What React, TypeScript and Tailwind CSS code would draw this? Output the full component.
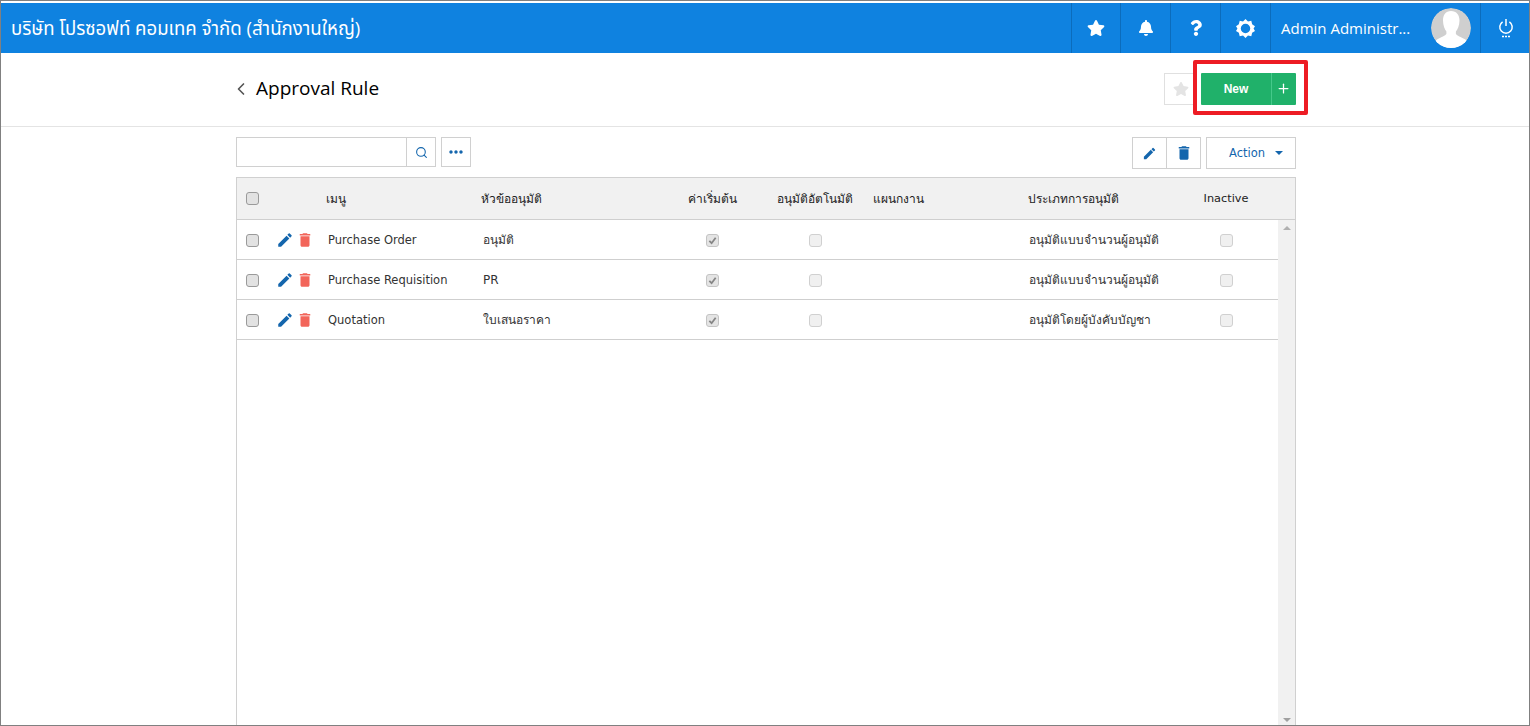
import { ChevronLeft, Plus, Search } from 'lucide-react'
import { FaBell, FaQuestion, FaStar } from 'react-icons/fa'
import { MdDelete, MdEdit, MdMoreHoriz } from 'react-icons/md'

interface Rule {
  menu: string
  subject: string
  type: string
}

const rules: Rule[] = [
  { menu: 'Purchase Order', subject: 'อนุมัติ', type: 'อนุมัติแบบจำนวนผู้อนุมัติ' },
  { menu: 'Purchase Requisition', subject: 'PR', type: 'อนุมัติแบบจำนวนผู้อนุมัติ' },
  { menu: 'Quotation', subject: 'ใบเสนอราคา', type: 'อนุมัติโดยผู้บังคับบัญชา' },
]

const rowGrid =
  'grid grid-cols-[30px_59px_155px_181px_100px_106px_159px_148px_102px] items-center'

function Checkbox({ checked, disabled }: { checked?: boolean; disabled?: boolean }) {
  return (
    <span
      className={`flex h-[13px] w-[13px] items-center justify-center rounded-[3px] border ${
        checked
          ? 'border-[#c4c4c4] bg-[#e4e4e4]'
          : disabled
            ? 'border-[#d0d0d0] bg-[#f0f0f0]'
            : 'border-[#9a9a9a] bg-[#e2e2e2]'
      }`}
    >
      {checked && (
        <svg viewBox="0 0 10 10" className="h-[9px] w-[9px]">
          <path d="M1.5 5.5 4 8l4.5-6" fill="none" stroke="#858585" strokeWidth="2" />
        </svg>
      )}
    </span>
  )
}

function HeaderCell({ children, narrow }: { children: React.ReactNode; narrow?: boolean }) {
  return (
    <div
      className={`flex h-[50px] items-center justify-center border-l border-[#0b6cbc] ${
        narrow ? 'w-[49px]' : 'w-[50px]'
      }`}
    >
      {children}
    </div>
  )
}

function GearIcon() {
  return (
    <svg viewBox="0 0 20 20" className="h-[19px] w-[19px]">
      <path
        fill="#fff"
        fillRule="evenodd"
        d="M10 0l2.6 2.6 3.5-.7.9 3.5 3 2.1-1.5 2.5 1.5 2.5-3 2.1-.9 3.5-3.5-.7L10 20l-2.6-2.6-3.5.7-.9-3.5-3-2.1L1.5 10 0 7.5l3-2.1.9-3.5 3.5.7zM10 5a5 5 0 1 0 0 10 5 5 0 0 0 0-10z"
      />
    </svg>
  )
}

function PowerIcon() {
  return (
    <svg viewBox="0 0 16 20" className="h-5 w-4" fill="none" stroke="#fff">
      <path d="M8 1v7" strokeWidth="1.5" />
      <path d="M4.6 3.8a6.2 6.2 0 1 0 6.8 0" strokeWidth="1.5" />
      <path d="M4 18.5h2M7 18.5h2M10 18.5h2" strokeWidth="1.3" />
    </svg>
  )
}

function Avatar() {
  return (
    <svg viewBox="0 0 40 40" className="h-10 w-10 rounded-full">
      <circle cx="20" cy="20" r="20" fill="#cfcfcf" />
      <path
        fill="#fff"
        d="M20 3c5.6 0 8.5 4 8.5 9.5 0 5-2 9-3.6 11v2.6c1 1.6 5 3.2 9.1 5.2 1.4.8 2.6 2 3.2 3.2A20 20 0 0 1 20 40a20 20 0 0 1-16.8-5.5c.6-1.2 1.8-2.4 3.2-3.2 4-2 8-3.6 9-5.2v-2.6c-1.5-2-3.4-6-3.4-11C12 7 14.6 3 20 3z"
      />
    </svg>
  )
}

export default function App() {
  return (
    <div className="flex h-[726px] w-[1530px] flex-col overflow-hidden border border-[#808080] bg-white pt-[2px] font-['DejaVu_Sans',sans-serif]">
      {/* top bar */}
      <header className="flex h-[50px] shrink-0 items-center bg-[#0f82e0] pl-[10px] text-white">
        <div className="flex-1 font-['Open_Sans','Noto_Sans_Thai',sans-serif] text-[18.6px]">
          บริษัท โปรซอฟท์ คอมเทค จำกัด (สำนักงานใหญ่)
        </div>
        <HeaderCell narrow>
          <FaStar className="h-[18px] w-[18px]" />
        </HeaderCell>
        <HeaderCell>
          <FaBell className="h-4 w-4" />
        </HeaderCell>
        <HeaderCell>
          <FaQuestion className="h-4 w-4" />
        </HeaderCell>
        <HeaderCell>
          <GearIcon />
        </HeaderCell>
        <div className="flex h-[50px] w-[210px] items-center justify-between border-l border-[#0b6cbc] pl-[10px] pr-[9px]">
          <span className="font-['Open_Sans',sans-serif] text-[15px]">Admin Administr...</span>
          <Avatar />
        </div>
        <div className="flex h-[50px] w-[49px] items-center justify-center border-l border-[#0b6cbc] pl-px">
          <PowerIcon />
        </div>
      </header>

      {/* title row */}
      <div className="flex h-[74px] shrink-0 items-center border-b border-[#e4e4e4] pb-[2px] pl-[235px]">
        <div className="flex w-[1060px] items-center">
          <ChevronLeft className="-ml-[5px] h-5 w-5 text-[#555]" strokeWidth={2} />
          <h1 className="flex-1 pl-[5px] font-['Open_Sans',sans-serif] text-[19px] text-black">
            Approval Rule
          </h1>
          <button className="flex h-8 w-[33px] items-center justify-center border border-[#e0e0e0] bg-white">
            <FaStar className="h-4 w-4 text-[#e4e4e4]" />
          </button>
          <button className="ml-1 flex h-8 w-[70px] items-center justify-center rounded-l-[1px] bg-[#20b16a] font-['Liberation_Sans',sans-serif] text-[12px] font-bold text-white">
            New
          </button>
          <button className="flex h-8 w-[25px] items-center justify-center rounded-r-[1px] border-l border-[#45c98a] bg-[#20b16a] pr-[2px] text-white">
            <Plus className="h-[15px] w-[15px]" strokeWidth={2} />
          </button>
        </div>
      </div>

      {/* toolbar */}
      <div className="ml-[235px] mt-[10px] flex w-[1060px] shrink-0 items-start">
        <input className="h-[30px] w-[170px] border border-r-0 border-[#d0d0d0] bg-white" />
        <button className="flex h-[30px] w-[30px] items-center justify-center border border-[#d0d0d0]">
          <Search className="h-[13px] w-[13px] text-[#1466ad]" strokeWidth={2} />
        </button>
        <button className="ml-[5px] flex h-[30px] w-[30px] items-center justify-center border border-[#d0d0d0]">
          <MdMoreHoriz className="h-5 w-5 text-[#1466ad]" />
        </button>
        <div className="flex-1" />
        <button className="flex h-8 w-[35px] items-center justify-center border border-[#d0d0d0]">
          <MdEdit className="h-[15px] w-[15px] text-[#1466ad]" />
        </button>
        <button className="-ml-px flex h-8 w-[35px] items-center justify-center border border-[#d0d0d0]">
          <MdDelete className="h-[18px] w-[18px] text-[#1466ad]" />
        </button>
        <button className="ml-[5px] flex h-8 w-[90px] items-center justify-end gap-[10px] border border-[#d0d0d0] pr-[12px] text-[11.5px] text-[#1466ad]">
          <span className="pt-[2px]">Action</span>
          <span className="h-0 w-0 border-x-[4px] border-t-[4px] border-x-transparent border-t-[#1466ad]" />
        </button>
      </div>

      {/* table */}
      <div className="ml-[235px] mt-2 flex min-h-0 w-[1060px] flex-1 flex-col border border-b-0 border-[#d0d0d0]">
        <div className={`${rowGrid} h-[42px] shrink-0 border-b border-[#cfcfcf] bg-[#f1f1f1] pr-[17px] text-[12px] text-[#222]`}>
          <div className="flex justify-center">
            <Checkbox />
          </div>
          <div />
          <div>เมนู</div>
          <div>หัวข้ออนุมัติ</div>
          <div className="text-center">ค่าเริ่มต้น</div>
          <div className="text-center">อนุมัติอัตโนมัติ</div>
          <div className="pl-[5px]">แผนกงาน</div>
          <div className="pl-px">ประเภทการอนุมัติ</div>
          <div className="pt-px text-center text-[11.3px]">Inactive</div>
        </div>
        <div className="flex min-h-0 flex-1">
          <div className="flex-1">
            {rules.map((rule) => (
              <div
                key={rule.menu}
                className={`${rowGrid} h-10 border-b border-[#cfcfcf] text-[12px] text-[#333]`}
              >
                <div className="flex justify-center pt-px">
                  <Checkbox />
                </div>
                <div className="flex items-center gap-[2px] pl-[9px] pt-px">
                  <MdEdit className="h-[18px] w-[18px] text-[#1466ad]" />
                  <MdDelete className="h-[18px] w-[18px] text-[#f2655a]" />
                </div>
                <div className="pl-[2px] pt-[2px] text-[11.5px]">{rule.menu}</div>
                <div className="pl-[2px]">{rule.subject}</div>
                <div className="flex justify-center pt-px">
                  <Checkbox checked disabled />
                </div>
                <div className="flex justify-center pt-px">
                  <Checkbox disabled />
                </div>
                <div />
                <div className="pl-[2px]">{rule.type}</div>
                <div className="flex justify-center pt-px">
                  <Checkbox disabled />
                </div>
              </div>
            ))}
          </div>
          {/* scrollbar */}
          <div className="flex w-[17px] shrink-0 flex-col items-center justify-between bg-[#f1f1f1] pb-[3px] pt-[6px]">
            <span className="h-0 w-0 border-x-[4px] border-b-[4px] border-x-transparent border-b-[#b0b0b0]" />
            <span className="h-0 w-0 border-x-[4px] border-t-[4px] border-x-transparent border-t-[#a0a0a0]" />
          </div>
        </div>
      </div>

      {/* red highlight around the New button */}
      <div className="absolute left-[1193px] top-[60px] h-[55px] w-[115px] rounded-[2px] border-4 border-[#ed1c24]" />
    </div>
  )
}
